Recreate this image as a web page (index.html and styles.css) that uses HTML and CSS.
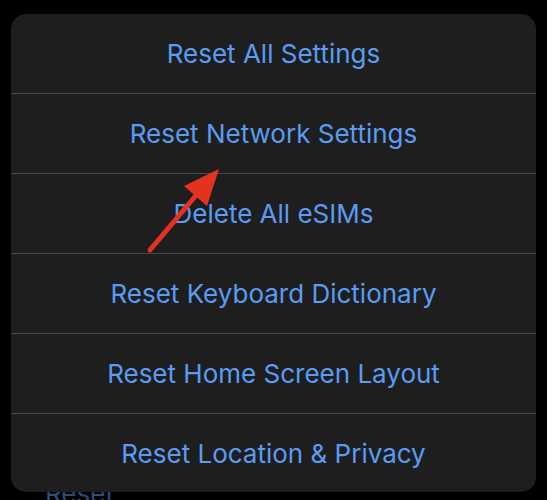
FILE: index.html
```html
<!DOCTYPE html>
<html>
<head>
<meta charset="utf-8">
<link rel="stylesheet" href="styles.css">
</head>
<body>
<div class="screen">
  <div class="under">Reset</div>
  <div class="sheet">
    <div class="row">Reset All Settings</div>
    <div class="row">Reset Network Settings</div>
    <div class="row">Delete All eSIMs</div>
    <div class="row">Reset Keyboard Dictionary</div>
    <div class="row">Reset Home Screen Layout</div>
    <div class="row">Reset Location &amp; Privacy</div>
  </div>
  <svg class="arrow" width="547" height="500" viewBox="0 0 547 500">
    <line x1="150" y1="250" x2="198" y2="193" stroke="#e5321e" stroke-width="5" stroke-linecap="round"/>
    <polygon points="219,169 184,186 207,206" fill="#e5321e"/>
  </svg>
</div>
</body>
</html>
```
FILE: styles.css
```css
html, body {
  margin: 0;
  padding: 0;
  background: #000;
}
.screen {
  position: relative;
  width: 547px;
  height: 500px;
  overflow: hidden;
  background: #000;
  padding-top: 14px;
  box-sizing: border-box;
}
.under {
  position: absolute;
  left: 45px;
  top: 478px;
  font-family: Inter, "Liberation Sans", sans-serif;
  font-size: 26px;
  color: #2a4d7c;
}
.sheet {
  position: relative;
  margin-left: 11px;
  width: 525px;
  height: 478px;
  background: #1e1e1f;
  border-radius: 15px;
  overflow: hidden;
  display: flex;
  flex-direction: column;
}
.row {
  height: 79px;
  flex: none;
  display: flex;
  align-items: center;
  justify-content: center;
  padding-bottom: 1px;
  box-sizing: border-box;
  height: 80px;
  border-bottom: 1px solid #4a4a4c;
  font-family: Inter, "Liberation Sans", sans-serif;
  font-size: 26px;
  color: #5a9cf2;
}
.row:last-child {
  border-bottom: none;
}
.arrow {
  position: absolute;
  left: 0;
  top: 0;
}
```
